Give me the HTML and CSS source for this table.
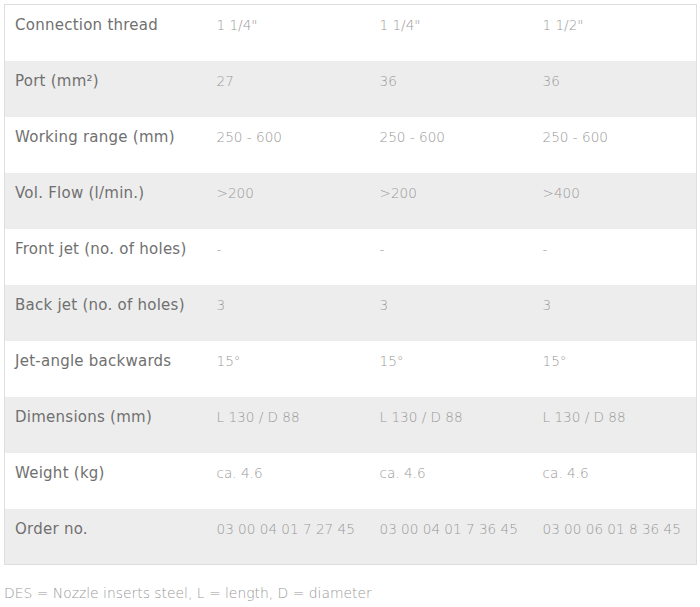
FILE: index.html
```html
<!DOCTYPE html>
<html>
<head>
<meta charset="utf-8">
<link rel="stylesheet" href="styles.css">
</head>
<body>
<div class="page">
<table class="specs">
<colgroup>
<col class="c-label"><col class="c-val"><col class="c-val"><col class="c-last">
</colgroup>
<tbody>
<tr><th>Connection thread</th><td>1 1/4"</td><td>1 1/4"</td><td>1 1/2"</td></tr>
<tr><th>Port (mm²)</th><td>27</td><td>36</td><td>36</td></tr>
<tr><th>Working range (mm)</th><td>250 - 600</td><td>250 - 600</td><td>250 - 600</td></tr>
<tr><th>Vol. Flow (l/min.)</th><td>&gt;200</td><td>&gt;200</td><td>&gt;400</td></tr>
<tr><th>Front jet (no. of holes)</th><td>-</td><td>-</td><td>-</td></tr>
<tr><th>Back jet (no. of holes)</th><td>3</td><td>3</td><td>3</td></tr>
<tr><th>Jet-angle backwards</th><td>15°</td><td>15°</td><td>15°</td></tr>
<tr><th>Dimensions (mm)</th><td>L 130 / D 88</td><td>L 130 / D 88</td><td>L 130 / D 88</td></tr>
<tr><th>Weight (kg)</th><td>ca. 4.6</td><td>ca. 4.6</td><td>ca. 4.6</td></tr>
<tr><th>Order no.</th><td>03 00 04 01 7 27 45</td><td>03 00 04 01 7 36 45</td><td>03 00 06 01 8 36 45</td></tr>
</tbody>
</table>
<p class="note">DES = Nozzle inserts steel, L = length, D = diameter</p>
</div>
</body>
</html>
```
FILE: styles.css
```css
html, body {
  margin: 0;
  padding: 0;
  background: #fff;
}
.page {
  padding: 4px 4px 0 4px;
}
.specs {
  width: 692px;
  border-collapse: collapse;
  border: 1px solid #dedede;
  table-layout: fixed;
}
.c-label { width: 202px; }
.c-val { width: 163px; }
.c-last { width: 164px; }
.specs tr { height: 56px; }
.specs tr:nth-child(even) { background: #ededed; }
.specs th, .specs td {
  vertical-align: top;
  text-align: left;
  padding: 10px 0 0 10px;
  line-height: 20px;
  white-space: nowrap;
}
.specs th {
  font-family: "DejaVu Sans", Verdana, sans-serif;
  font-weight: normal;
  font-size: 15px;
  letter-spacing: 0.25px;
  color: #707070;
}
.specs td {
  font-family: "DejaVu Sans", sans-serif;
  font-weight: 200;
  font-size: 13.6px;
  color: #999999;
}
.note {
  margin: 20px 0 0 0;
  font-family: "DejaVu Sans", sans-serif;
  font-weight: 200;
  font-size: 13.9px;
  color: #999999;
}
```
